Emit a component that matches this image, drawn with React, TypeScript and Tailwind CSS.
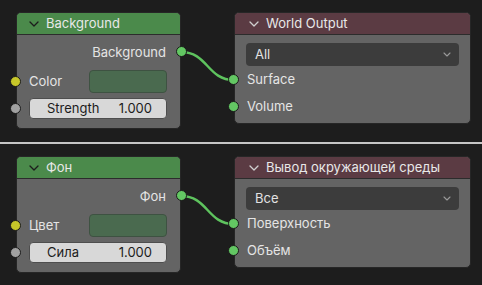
import React from "react";

type Labels = {
  bgTitle: string;
  bgOut: string;
  color: string;
  strength: string;
  outTitle: string;
  all: string;
  surface: string;
  volume: string;
};

const EN: Labels = {
  bgTitle: "Background",
  bgOut: "Background",
  color: "Color",
  strength: "Strength",
  outTitle: "World Output",
  all: "All",
  surface: "Surface",
  volume: "Volume",
};

const RU: Labels = {
  bgTitle: "Фон",
  bgOut: "Фон",
  color: "Цвет",
  strength: "Сила",
  outTitle: "Вывод окружающей среды",
  all: "Все",
  surface: "Поверхность",
  volume: "Объём",
};

function Chevron({ color }: { color: string }) {
  return (
    <svg width="10" height="6" viewBox="0 0 10 6" className="shrink-0">
      <path d="M1 1 L5 5 L9 1" fill="none" stroke={color} strokeWidth="1.3" strokeLinecap="round" strokeLinejoin="round" />
    </svg>
  );
}

function BackgroundNode({ t }: { t: Labels }) {
  return (
    <div className="absolute left-[16px] top-[12px] w-[165px] h-[117px] rounded-[5px] bg-[#646464] border border-[#262626] flex flex-col">
      <div className="h-[22px] bg-[#4b8a4b] rounded-t-[4px] border-b border-[#2c2c2c] flex items-center pl-[12px] gap-[7px]">
        <Chevron color="#1c1c1c" />
        <span className="text-[13px] text-[#e8e8e8] leading-none">{t.bgTitle}</span>
      </div>
      <div className="flex flex-col pt-[6px]">
        <div className="relative h-[22px] flex items-center justify-end pr-[14px]">
          <span className="text-[13px] text-[#e4e4e4] leading-none">{t.bgOut}</span>
          <div className="absolute right-[-7px] top-[5px] w-[11px] h-[11px] rounded-full border border-[#1a1a1a] bg-[#63c763]" />
        </div>
        <div className="relative mt-[7px] h-[23px] flex items-center pl-[12px] pr-[13px]">
          <div className="absolute left-[-7px] top-[6px] w-[11px] h-[11px] rounded-full border border-[#1a1a1a] bg-[#c7c729]" />
          <span className="text-[13px] text-[#e4e4e4] leading-none">{t.color}</span>
          <div className="ml-auto w-[78px] h-[23px] rounded-[4px] bg-[#4a6a4f] border border-[#3e5242]" />
        </div>
        <div className="relative mt-[5px] h-[21px] flex items-center ml-[12px] mr-[13px]">
          <div className="absolute left-[-19px] top-[5px] w-[11px] h-[11px] rounded-full border border-[#1a1a1a] bg-[#a1a1a1]" />
          <div className="w-full h-[21px] rounded-[4px] bg-[#d8d8d8] border border-[#4e4e4e] flex items-center justify-between pl-[17px] pr-[14px]">
            <span className="text-[13px] text-[#1c1c1c] leading-none">{t.strength}</span>
            <span className="text-[13px] text-[#1c1c1c] leading-none">1.000</span>
          </div>
        </div>
      </div>
    </div>
  );
}

function OutputNode({ t }: { t: Labels }) {
  return (
    <div className="absolute left-[234px] top-[12px] w-[237px] h-[112px] rounded-[5px] bg-[#646464] border border-[#262626] flex flex-col">
      <div className="h-[22px] bg-[#5b3b43] rounded-t-[4px] border-b border-[#2c2c2c] flex items-center pl-[14px] gap-[7px]">
        <Chevron color="#d0d0d0" />
        <span className="text-[13px] text-[#e8e8e8] leading-none">{t.outTitle}</span>
      </div>
      <div className="mt-[8px] mx-[11px] h-[23px] rounded-[4px] bg-[#3c3c3c] flex items-center pl-[9px] pr-[8px]">
        <span className="text-[13px] text-[#e2e2e2] leading-none">{t.all}</span>
        <svg width="8" height="5" viewBox="0 0 8 5" className="ml-auto">
          <path d="M1 1 L4 4 L7 1" fill="none" stroke="#9a9a9a" strokeWidth="1.1" strokeLinecap="round" strokeLinejoin="round" />
        </svg>
      </div>
      <div className="relative h-[27px] flex items-center pl-[12px]">
        <div className="absolute left-[-7px] top-[8px] w-[11px] h-[11px] rounded-full border border-[#1a1a1a] bg-[#63c763]" />
        <span className="text-[13px] text-[#e4e4e4] leading-none">{t.surface}</span>
      </div>
      <div className="relative h-[27px] flex items-center pl-[12px]">
        <div className="absolute left-[-7px] top-[8px] w-[11px] h-[11px] rounded-full border border-[#1a1a1a] bg-[#63c763]" />
        <span className="text-[13px] text-[#e4e4e4] leading-none">{t.volume}</span>
      </div>
    </div>
  );
}

function Panel({ t, h }: { t: Labels; h: string }) {
  return (
    <div className={`relative w-full bg-[#1d1d1d] overflow-hidden ${h}`}>
      <svg className="absolute left-0 top-0" width="482" height="142">
        <path d="M181 52 C 208 52, 207 80, 234 80" fill="none" stroke="#5ec35e" strokeWidth="2.4" />
      </svg>
      <BackgroundNode t={t} />
      <OutputNode t={t} />
    </div>
  );
}

export default function App() {
  return (
    <div className="w-[482px] h-[285px] flex flex-col bg-[#1d1d1d] font-['Inter','Noto_Sans',sans-serif]">
      <Panel t={EN} h="h-[142px]" />
      <div className="h-[2px] bg-[#c6c6c6]" />
      <Panel t={RU} h="h-[141px]" />
    </div>
  );
}
